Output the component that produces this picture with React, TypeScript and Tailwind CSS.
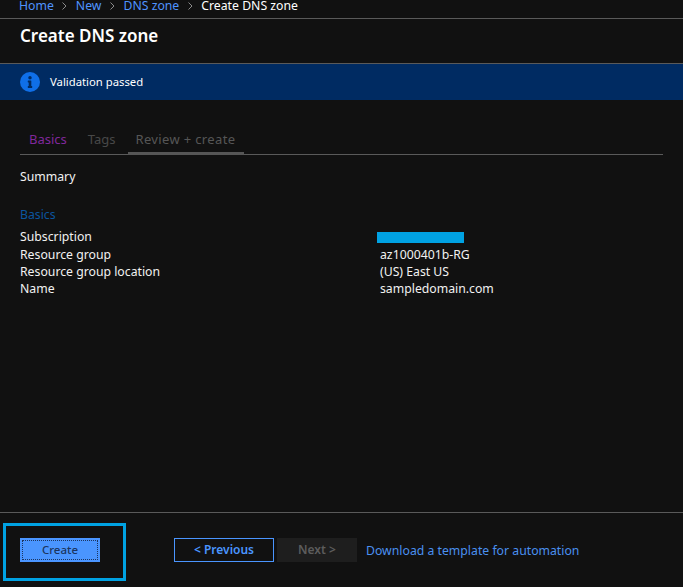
import { FaInfo } from "react-icons/fa";

const crumbs = ["Home", "New", "DNS zone"];

const summary = [
  { label: "Subscription", value: "" },
  { label: "Resource group", value: "az1000401b-RG" },
  { label: "Resource group location", value: "(US) East US" },
  { label: "Name", value: "sampledomain.com" },
];

function App() {
  return (
    <div className="h-[587px] w-[683px] flex flex-col overflow-hidden bg-[#111111] text-[12.25px] text-[#f2f2f2] font-['Noto_Sans',sans-serif]">
      <div className="h-[19px] shrink-0 border-b border-[#5a5a5a] pl-[19px] flex items-start">
        <div className="flex items-center h-[12px] leading-[12px]">
          {crumbs.map((c) => (
            <span key={c} className="flex items-center">
              <a className="text-[#4f94ff]">{c}</a>
              <svg width="5" height="8" viewBox="0 0 5 8" className="mx-[8.5px]" fill="none">
                <path d="M0.5 0.5L4 4L0.5 7.5" stroke="#8a8a8a" strokeWidth="1" />
              </svg>
            </span>
          ))}
          <span className="text-white">Create DNS zone</span>
        </div>
      </div>

      <div className="h-[45px] shrink-0 border-b border-[#5a5a5a] pl-[20px] pt-[6px]">
        <h1 className="text-[17px] leading-[22px] font-semibold text-white">Create DNS zone</h1>
      </div>

      <div className="h-[36px] shrink-0 bg-[#002b62] pl-[20px] flex items-center gap-[10px]">
        <span className="w-[20px] h-[20px] rounded-full bg-[#0f6fe8] flex items-center justify-center">
          <FaInfo size={12} className="text-[#002b62]" />
        </span>
        <span className="text-white text-[11.3px]">Validation passed</span>
      </div>

      <div className="mt-[27px] mx-[20px] h-[28px] shrink-0 flex border-b border-[#5a5a5a] text-[13px]">
        <div className="pl-[9px] pr-[21px] leading-[24px] text-[#80289c]">Basics</div>
        <div className="pr-[12px] leading-[24px] text-[#484848]">Tags</div>
        <div className="pl-[8px] pr-[9px] leading-[24px] text-[#565656] h-[28px] border-b-[3px] border-[#565656] tracking-[0.35px]">
          Review + create
        </div>
      </div>

      <div className="flex-1 px-[20px] pt-[13px]">
        <div className="leading-[18px]">Summary</div>
        <div className="mt-[20px] leading-[18px] text-[#0b559f]">Basics</div>
        <div className="mt-[5px]">
          {summary.map((row) => (
            <div key={row.label} className="flex h-[17.3px] items-center">
              <div className="w-[357px] shrink-0">{row.label}</div>
              {row.value ? (
                <div className="pl-[3px]">{row.value}</div>
              ) : (
                <div className="w-[87px] h-[11px] bg-[#00a2e3]" />
              )}
            </div>
          ))}
        </div>
      </div>

      <div className="h-[75px] shrink-0 border-t border-[#5a5a5a] flex items-center pl-[3px]">
        <div className="mt-[4px] w-[123px] h-[58px] border-[3px] border-[#00a2e3] pl-[14px] pb-[4px] flex items-center">
          <button className="w-[80px] h-[24px] bg-[#4a95ff] text-[#1c3560] text-[11.5px] font-medium outline-1 outline-dotted outline-[#1c3560] -outline-offset-3">
            Create
          </button>
        </div>
        <button className="ml-[48px] w-[100px] h-[24px] border border-[#4a95ff] text-[#4a95ff] text-[12px] font-semibold">
          &lt; Previous
        </button>
        <button className="ml-[3px] w-[80px] h-[24px] bg-[#1e1e1e] text-[#5c5c5c] text-[12px] font-semibold">
          Next &gt;
        </button>
        <a className="ml-[9px] pt-[2px] text-[#4a90f0]">Download a template for automation</a>
      </div>
    </div>
  );
}

export default App;
